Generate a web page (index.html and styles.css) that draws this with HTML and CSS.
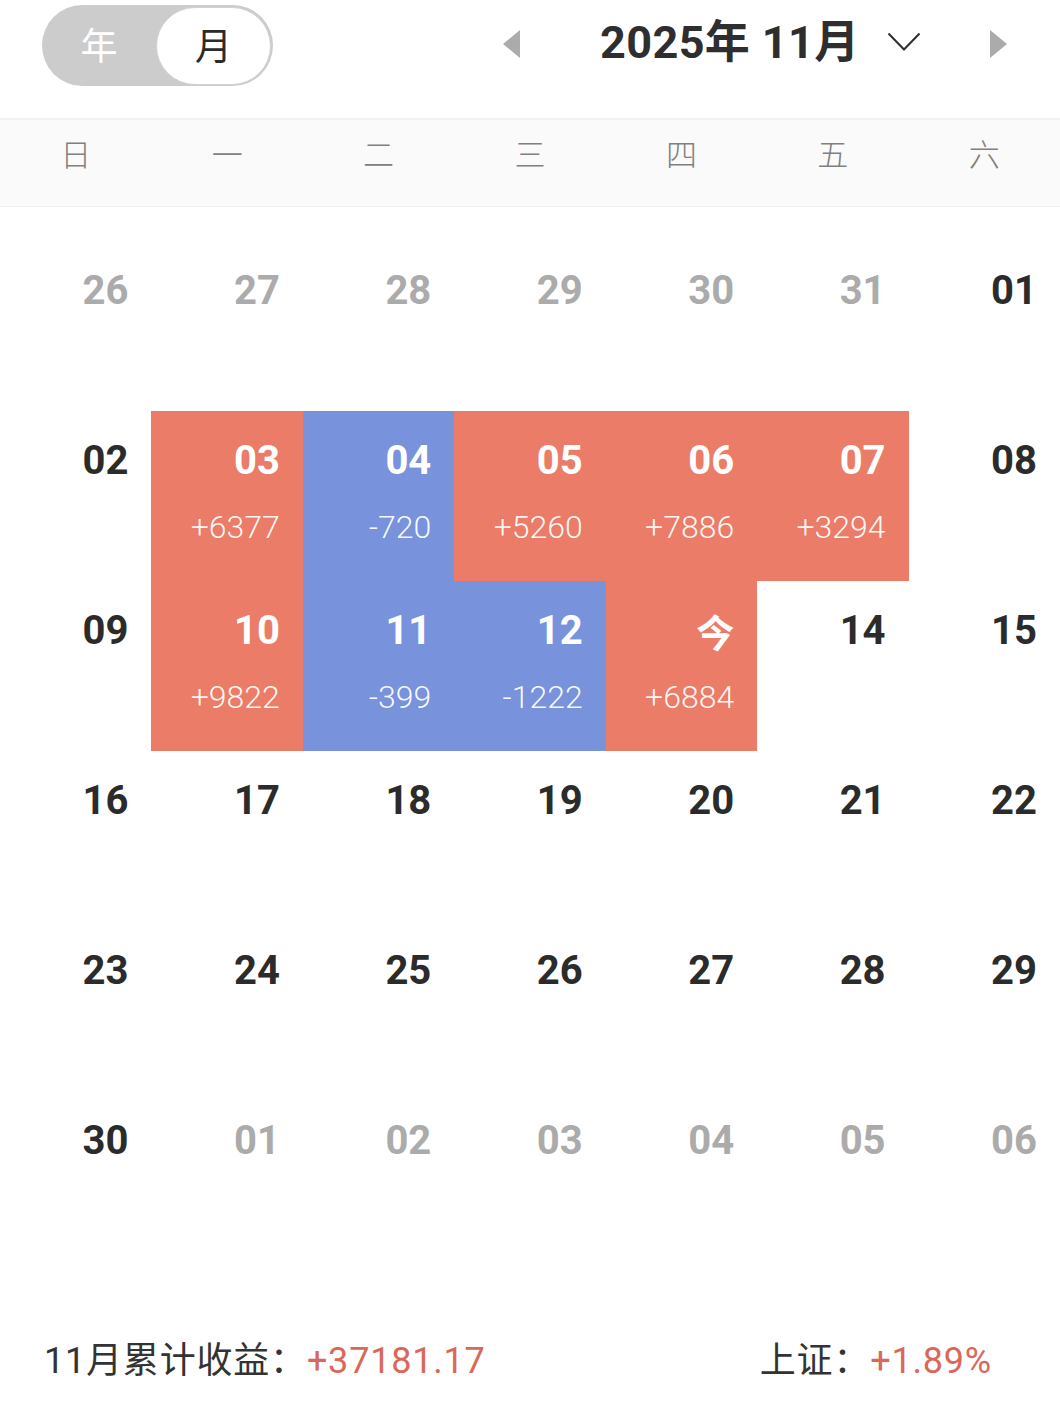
FILE: index.html
```html
<!DOCTYPE html>
<html lang="zh-CN">
<head>
<meta charset="utf-8">
<link rel="stylesheet" href="styles.css">
</head>
<body>
<div class="page">
  <header class="topbar">
    <div class="toggle">
      <span class="toggle-opt">年</span>
      <span class="toggle-opt active">月</span>
    </div>
    <div class="nav">
      <svg class="tri" width="19" height="30" viewBox="0 0 19 30"><path d="M18 1 L1 15 L18 29 Z" fill="#ababab"/></svg>
      <div class="title">2025年 11月</div>
      <svg class="chev" width="34" height="20" viewBox="0 0 34 20"><path d="M1.5 1.5 L17 17.5 L32.5 1.5" fill="none" stroke="#2e2e2e" stroke-width="2"/></svg>
      <svg class="tri right" width="19" height="30" viewBox="0 0 19 30"><path d="M1 1 L18 15 L1 29 Z" fill="#ababab"/></svg>
    </div>
  </header>

  <div class="weekdays">
    <span>日</span><span>一</span><span>二</span><span>三</span><span>四</span><span>五</span><span>六</span>
  </div>

  <div class="grid">
    <div class="cell other"><span class="num">26</span></div>
    <div class="cell other"><span class="num">27</span></div>
    <div class="cell other"><span class="num">28</span></div>
    <div class="cell other"><span class="num">29</span></div>
    <div class="cell other"><span class="num">30</span></div>
    <div class="cell other"><span class="num">31</span></div>
    <div class="cell"><span class="num">01</span></div>

    <div class="cell"><span class="num">02</span></div>
    <div class="cell up"><span class="num">03</span><span class="val">+6377</span></div>
    <div class="cell down"><span class="num">04</span><span class="val">-720</span></div>
    <div class="cell up"><span class="num">05</span><span class="val">+5260</span></div>
    <div class="cell up"><span class="num">06</span><span class="val">+7886</span></div>
    <div class="cell up"><span class="num">07</span><span class="val">+3294</span></div>
    <div class="cell"><span class="num">08</span></div>

    <div class="cell"><span class="num">09</span></div>
    <div class="cell up"><span class="num">10</span><span class="val">+9822</span></div>
    <div class="cell down"><span class="num">11</span><span class="val">-399</span></div>
    <div class="cell down"><span class="num">12</span><span class="val">-1222</span></div>
    <div class="cell up"><span class="num today">今</span><span class="val">+6884</span></div>
    <div class="cell"><span class="num">14</span></div>
    <div class="cell"><span class="num">15</span></div>

    <div class="cell"><span class="num">16</span></div>
    <div class="cell"><span class="num">17</span></div>
    <div class="cell"><span class="num">18</span></div>
    <div class="cell"><span class="num">19</span></div>
    <div class="cell"><span class="num">20</span></div>
    <div class="cell"><span class="num">21</span></div>
    <div class="cell"><span class="num">22</span></div>

    <div class="cell"><span class="num">23</span></div>
    <div class="cell"><span class="num">24</span></div>
    <div class="cell"><span class="num">25</span></div>
    <div class="cell"><span class="num">26</span></div>
    <div class="cell"><span class="num">27</span></div>
    <div class="cell"><span class="num">28</span></div>
    <div class="cell"><span class="num">29</span></div>

    <div class="cell"><span class="num">30</span></div>
    <div class="cell other"><span class="num">01</span></div>
    <div class="cell other"><span class="num">02</span></div>
    <div class="cell other"><span class="num">03</span></div>
    <div class="cell other"><span class="num">04</span></div>
    <div class="cell other"><span class="num">05</span></div>
    <div class="cell other"><span class="num">06</span></div>
  </div>

  <footer class="summary">
    <div class="stat">11月累计收益：<span class="pos">+37181.17</span></div>
    <div class="stat">上证：<span class="pos">+1.89%</span></div>
  </footer>
</div>
</body>
</html>
```

FILE: styles.css
```css
* { box-sizing: border-box; }
html, body { margin: 0; padding: 0; background: #ffffff; }
body {
  font-family: Roboto, "Noto Sans CJK SC", "Noto Sans", sans-serif;
  color: #2b2b2b;
}
.page { width: 1060px; }

.topbar {
  height: 120px;
  display: flex;
  align-items: flex-start;
  padding-left: 42px;
  border-bottom: 2px solid #f2f2f2;
}
.toggle {
  margin-top: 5px;
  width: 231px;
  height: 81px;
  border-radius: 41px;
  background: #cccccc;
  display: flex;
  align-items: center;
  padding: 0 2px 0 0;
}
.toggle-opt {
  flex: 1;
  height: 78px;
  display: flex;
  align-items: center;
  justify-content: center;
  font-family: "Noto Sans CJK SC", sans-serif;
  font-size: 37px;
  color: #ffffff;
  border-radius: 40px;
  padding-bottom: 4px;
}
.toggle-opt.active {
  flex: 0 0 115px;
  background: #ffffff;
  color: #2b2b2b;
  border: 1.5px solid #d2d2d2;
}
.nav {
  display: flex;
  align-items: center;
  height: 88px;
  margin-left: 229px;
}
.tri { display: block; }
.title {
  margin-left: 79px;
  margin-bottom: 3px;
  font-size: 45px;
  font-weight: 700;
  color: #2e2e2e;
  letter-spacing: 0.4px;
  font-family: Roboto, "Noto Sans CJK SC", sans-serif;
  line-height: 56px;
}
.chev { margin-left: 27px; margin-bottom: 4px; }
.tri.right { margin-left: 68px; }

.weekdays {
  display: grid;
  grid-template-columns: repeat(7, 1fr);
  height: 87px;
  background: #fafafa;
  border-bottom: 1px solid #efefef;
  align-items: center;
  padding-bottom: 21px;
}
.weekdays span {
  text-align: center;
  font-family: "Noto Sans CJK SC", sans-serif;
  font-weight: 300;
  font-size: 31px;
  color: #808080;
  line-height: 1;
}

.grid {
  display: grid;
  grid-template-columns: repeat(7, 1fr);
  grid-auto-rows: 170px;
  padding-top: 34px;
}
.cell {
  display: flex;
  flex-direction: column;
  align-items: flex-end;
  padding: 25px 23px 0 0;
}
.num {
  font-size: 40px;
  font-weight: 700;
  line-height: 50px;
  color: #2b2b2b;
}
.num.today {
  font-family: "Noto Sans CJK SC", sans-serif;
  font-size: 38px;
}
.other .num { color: #ababab; }
.val {
  margin-top: 21px;
  font-size: 32px;
  font-weight: 300;
  line-height: 40px;
  color: rgba(255,255,255,0.94);
}
.up { background: #ea7c68; }
.down { background: #7892dc; }
.up .num, .down .num { color: #ffffff; }

.summary {
  margin-top: 71px;
  display: flex;
  justify-content: space-between;
  padding: 0 68px 0 44px;
  height: 50px;
  align-items: center;
}
.stat {
  font-family: Roboto, "Noto Sans CJK SC", sans-serif;
  font-size: 36px;
  color: #333333;
  letter-spacing: 0.8px;
}
.pos { color: #d9685a; }
```
